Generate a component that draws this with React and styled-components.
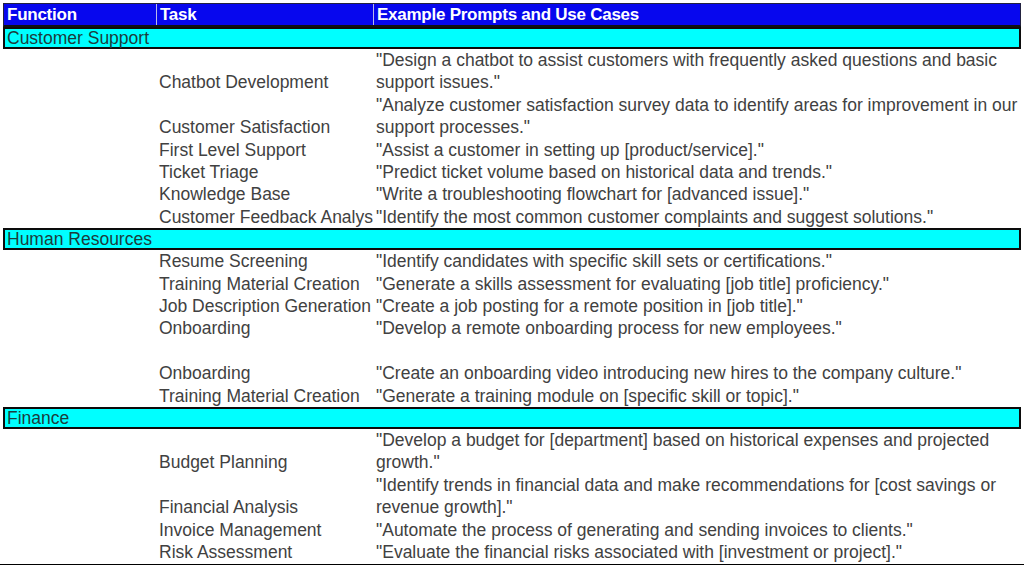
import React from 'react';
import styled, { createGlobalStyle } from 'styled-components';

const GlobalStyle = createGlobalStyle`
  html, body {
    margin: 0;
    padding: 0;
    background: #ffffff;
  }
  body {
    font-family: "Liberation Sans", Arial, sans-serif;
    font-size: 17.5px;
  }
`

const Page = styled.div`
  width: 1024px;
  height: 565px;
  overflow: hidden;
  padding: 3px 3px 0 3px;
  box-sizing: border-box;
`

const Sheet = styled.div`
  display: flex;
  flex-direction: column;
  border-bottom: 2px solid #000;
  margin-left: -3px;
  margin-right: -3px;
  padding: 0 3px;
`

const HeaderRow = styled.div`
  display: grid;
  grid-template-columns: 153px 217px 1fr;
  height: 24px;
  box-sizing: border-box;
  background: #0707ee;
  border: 1px solid #222240;
  border-bottom: 2px solid #111;
`

const HeaderCell = styled.div`
  display: flex;
  align-items: center;
  padding-left: 3px;
  color: #ffffff;
  font-weight: bold;
  font-size: 17px;
  letter-spacing: -0.25px;
  white-space: nowrap;
  border-left: ${({ first }) => (first ? 'none' : '1px solid #b8b8e8')};
  margin-left: ${({ first }) => (first ? '0' : '-1px')};
`

const SectionBar = styled.div`
  height: 22px;
  box-sizing: border-box;
  background: #00ffff;
  border: 2px solid #0c0c0c;
  display: flex;
  align-items: center;
  padding-left: 2px;
  color: #1c3c3c;
  font-size: 17.5px;
`

const DataRow = styled.div`
  display: grid;
  grid-template-columns: 153px 217px 1fr;
  align-items: end;
  line-height: 22.4px;
  min-height: 22.4px;
  color: #414141;
  font-size: 17.5px;
`

const TaskCell = styled.div`
  padding-left: 3px;
  white-space: nowrap;
`

const PromptCell = styled.div`
  padding-left: 3px;
`

const sections = [
  {
    name: 'Customer Support',
    rows: [
      ['Chatbot Development', '"Design a chatbot to assist customers with frequently asked questions and basic support issues."'],
      ['Customer Satisfaction', '"Analyze customer satisfaction survey data to identify areas for improvement in our support processes."'],
      ['First Level Support', '"Assist a customer in setting up [product/service]."'],
      ['Ticket Triage', '"Predict ticket volume based on historical data and trends."'],
      ['Knowledge Base', '"Write a troubleshooting flowchart for [advanced issue]."'],
      ['Customer Feedback Analys', '"Identify the most common customer complaints and suggest solutions."'],
    ],
  },
  {
    name: 'Human Resources',
    rows: [
      ['Resume Screening', '"Identify candidates with specific skill sets or certifications."'],
      ['Training Material Creation', '"Generate a skills assessment for evaluating [job title] proficiency."'],
      ['Job Description Generation', '"Create a job posting for a remote position in [job title]."'],
      ['Onboarding', '"Develop a remote onboarding process for new employees."'],
      ['', ''],
      ['Onboarding', '"Create an onboarding video introducing new hires to the company culture."'],
      ['Training Material Creation', '"Generate a training module on [specific skill or topic]."'],
    ],
  },
  {
    name: 'Finance',
    rows: [
      ['Budget Planning', '"Develop a budget for [department] based on historical expenses and projected growth."'],
      ['Financial Analysis', '"Identify trends in financial data and make recommendations for [cost savings or revenue growth]."'],
      ['Invoice Management', '"Automate the process of generating and sending invoices to clients."'],
      ['Risk Assessment', '"Evaluate the financial risks associated with [investment or project]."'],
    ],
  },
]

const App = () => {
  return (
    <Page>
      <GlobalStyle />
      <Sheet>
        <HeaderRow>
          <HeaderCell first>Function</HeaderCell>
          <HeaderCell>Task</HeaderCell>
          <HeaderCell>Example Prompts and Use Cases</HeaderCell>
        </HeaderRow>

        {sections.map((section) => (
          <React.Fragment key={section.name}>
            <SectionBar>{section.name}</SectionBar>
            {section.rows.map(([task, prompt], i) => (
              <DataRow key={i}>
                <div />
                <TaskCell>{task}</TaskCell>
                <PromptCell>{prompt}</PromptCell>
              </DataRow>
            ))}
          </React.Fragment>
        ))}
      </Sheet>
    </Page>
  )
};

export default App;
